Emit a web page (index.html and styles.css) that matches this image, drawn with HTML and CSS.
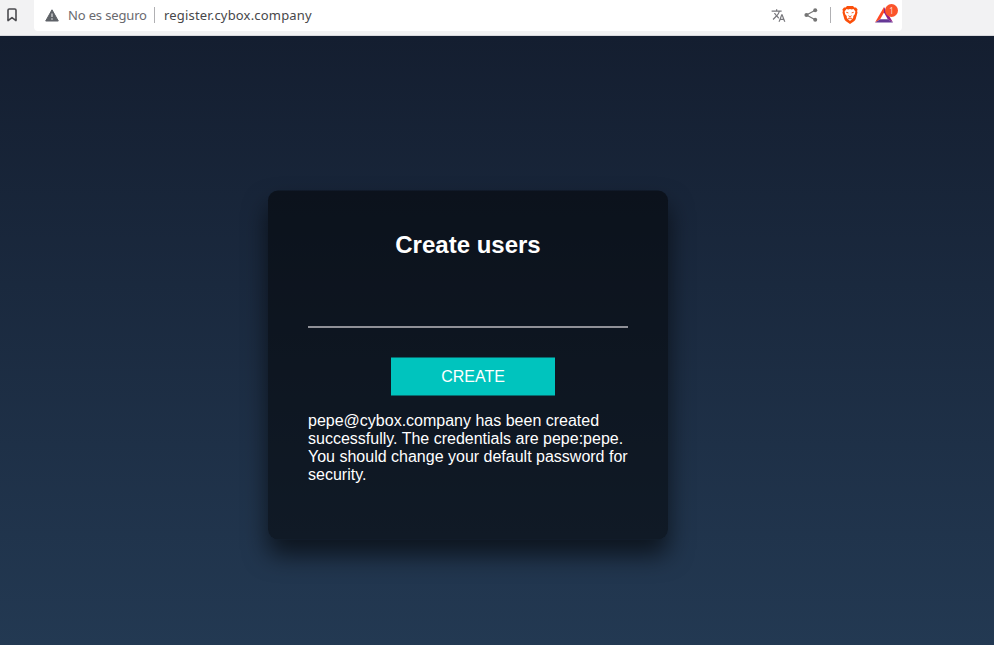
FILE: index.html
```html
<!DOCTYPE html>
<html lang="es">
<head>
<meta charset="utf-8">
<title>Create users</title>
<link rel="stylesheet" href="styles.css">
</head>
<body>
<header class="toolbar">
  <svg class="bookmark" width="10" height="14" viewBox="0 0 10 14"><path d="M1 2.2Q1 1 2.2 1H7.8Q9 1 9 2.2V12.6L5 9.6L1 12.6Z" fill="none" stroke="#4b4b4f" stroke-width="1.6" stroke-linejoin="round"/></svg>
  <div class="address">
    <svg class="warning" width="14" height="13" viewBox="0 0 14 13"><path d="M7 .8L13.3 12H.7Z" fill="#5f6368" stroke="#5f6368" stroke-width="1" stroke-linejoin="round"/><path d="M7 4.500V8M7 9.300V10.700" stroke="#d5d6d8" stroke-width="1.300"/></svg>
    <span class="insecure">No es seguro</span>
    <span class="divider"></span>
    <span class="url">register.cybox.company</span>
    <div class="actions">
      <svg class="translate" width="15" height="15" viewBox="0 0 24 24"><path fill="#77777c" d="M12.87 15.07l-2.54-2.51.03-.03A17.52 17.52 0 0 0 14.07 6H17V4h-7V2H8v2H1v1.99h11.17C11.5 7.92 10.44 9.75 9 11.35 8.07 10.32 7.3 9.19 6.69 8h-2c.73 1.63 1.73 3.17 2.98 4.56l-5.09 5.02L4 19l5-5 3.11 3.11.76-2.04zM18.5 10h-2L12 22h2l1.12-3h4.75L21 22h2l-4.500-12zm-2.62 7l1.62-4.330L19.120 17h-3.240z"/></svg>
      <svg class="share" width="14" height="14" viewBox="0 0 14 14"><path d="M11.200 2.300L2.500 7L11.200 11.700" fill="none" stroke="#757575" stroke-width="1.200"/><g fill="#757575"><circle cx="11.200" cy="2.300" r="2"/><circle cx="2.500" cy="7" r="2.100"/><circle cx="11.200" cy="11.700" r="2"/></g></svg>
      <span class="divider"></span>
      <svg class="brave" width="16" height="18" viewBox="0 0 16 18"><path fill="#fb4f0a" d="M5 0H11L12.400 1.600L14 1.400L15.600 3.600L15.100 5L15.500 6.500L13.700 13Q13.200 14.500 12 15.300L8 18L4 15.300Q2.800 14.500 2.300 13L.5 6.500L.9 5L.4 3.600L2 1.400L3.600 1.600Z"/><path fill="#fff" d="M4.500 3L6.300 3.400L8 3L9.700 3.400L11.500 3L13.400 5.500L12.800 8.200L11.300 10L11.100 12L8 15L4.900 12L4.700 10L3.200 8.200L2.600 5.500Z"/><path fill="none" stroke="#fb4f0a" stroke-width=".9" d="M4.300 6.300L6.400 6.900M11.700 6.300L9.600 6.900M6.400 9.700L8 10.700L9.600 9.700M8 10.700V11.800M6 12.200L8 12.800L10 12.200"/></svg>
      <div class="rewards">
        <svg width="18" height="16" viewBox="0 0 18 16"><path fill="#ff4a24" d="M9 0L0 15.500L5.200 12.200L9 5.500Z"/><path fill="#952084" d="M9 0L18 15.500L12.800 12.200L9 5.500Z"/><path fill="#653896" d="M0 15.500H18L13 12.200H5.200Z"/></svg>
        <span class="badge">1</span>
      </div>
    </div>
  </div>
</header>
<main class="page">
  <section class="card">
    <h2>Create users</h2>
    <form>
      <input class="email" type="text" aria-label="Email">
      <button class="create" type="button">CREATE</button>
    </form>
    <p class="message">pepe@cybox.company has been created successfully. The credentials are pepe:pepe. You should change your default password for security.</p>
  </section>
</main>
</body>
</html>
```
FILE: styles.css
```css
* { box-sizing: border-box; }
body {
  margin: 0;
  height: 645px;
  overflow: hidden;
  display: flex;
  flex-direction: column;
  font-family: "Liberation Sans", Arial, sans-serif;
}
.toolbar {
  flex: none;
  height: 36px;
  display: flex;
  align-items: flex-start;
  background: #f2f2f3;
  border-bottom: 1px solid #d9d9dd;
  font: 13px/18px "Noto Sans", sans-serif;
}
.bookmark { margin: 8px 17px 0 7px; flex: none; }
.address {
  width: 868px;
  height: 31px;
  padding: 0 4px 1px 11px;
  display: flex;
  align-items: center;
  background: #fff;
  border-radius: 0 0 4px 4px;
}
.insecure {
  width: 86px;
  margin-left: 9px;
  color: #6a6a6f;
  letter-spacing: -.15px;
  white-space: nowrap;
}
.divider { width: 1px; height: 16px; background: #b0b0b3; flex: none; }
.url { margin-left: 9px; color: #47474a; letter-spacing: .18px; }
.actions { display: flex; align-items: center; margin-left: auto; }
.share { margin: 0 12px 0 18px; }
.brave { margin: 0 17px 0 11px; }
.rewards { position: relative; width: 23px; height: 16px; }
.rewards svg { display: block; }
.badge {
  position: absolute;
  top: -3px;
  right: 0;
  width: 13px;
  height: 13px;
  border-radius: 50%;
  background: #fb542b;
  color: #ffd9cf;
  font-size: 8px;
  line-height: 13px;
  text-align: center;
}
.page {
  flex: 1;
  display: flex;
  align-items: flex-start;
  padding: 155px 0 0 268px;
  background: #243b55 linear-gradient(#141e30, #243b55) 0 0 / 100% 658px no-repeat;
}
.card {
  width: 400px;
  height: 349px;
  padding: 40px;
  border-radius: 10px;
  background: rgba(0, 0, 0, .5);
  box-shadow: 0 15px 25px rgba(0, 0, 0, .6);
  color: #fff;
  transform: translateY(-.5px);
}
h2 { margin: 0 0 30px; font-size: 24px; line-height: 27px; text-align: center; }
form { display: flex; flex-direction: column; }
.email {
  height: 40px;
  padding: 10px 0;
  border: 0;
  border-bottom: 2px solid #8f9097;
  background: transparent;
  color: #fff;
  font: inherit;
  transform: translateY(.5px);
}
.create {
  width: 164px;
  height: 38px;
  margin: 30px 0 16px 83px;
  padding: 0;
  border: 0;
  background: #00c4be;
  color: #fff;
  font: 16px/18px "Liberation Sans", Arial, sans-serif;
}
.message { margin: 0; font-size: 16px; line-height: 18px; }
```
